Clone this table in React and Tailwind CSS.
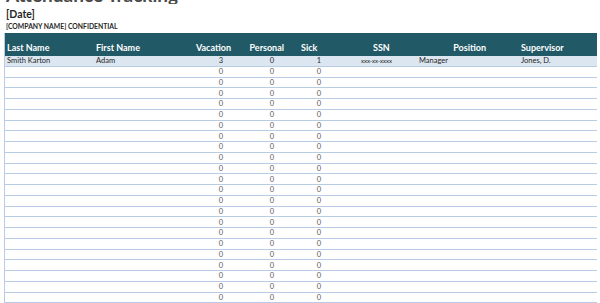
const cols = [
  { key: "last", label: "Last Name", w: "w-[88px]", head: "text-left pl-[2px]", cell: "text-left pl-[2px]" },
  { key: "first", label: "First Name", w: "w-[90px]", head: "text-left pl-[3px]", cell: "text-left pl-[3px]" },
  { key: "vac", label: "Vacation", w: "w-[53px]", head: "text-right pr-[5px]", cell: "text-right pr-[13px]" },
  { key: "per", label: "Personal", w: "w-[52px]", head: "text-right pr-[4px]", cell: "text-right pr-[14px]" },
  { key: "sick", label: "Sick", w: "w-[39px]", head: "text-left pl-[13px]", cell: "text-right pr-[6px]" },
  { key: "ssn", label: "SSN", w: "w-[89px]", head: "text-left pl-[46px]", cell: "text-left pl-[34px]" },
  { key: "pos", label: "Position", w: "w-[77px]", head: "text-right pr-[7px]", cell: "text-left pl-[3px]" },
  { key: "sup", label: "Supervisor", w: "w-[105px]", head: "text-left pl-[28px]", cell: "text-left pl-[28px]" },
];

const rows = [
  { last: "Smith Karton", first: "Adam", vac: 3, per: 0, sick: 1, ssn: "xxx-xx-xxxx", pos: "Manager", sup: "Jones, D." },
  ...Array.from({ length: 22 }, () => ({ vac: 0, per: 0, sick: 0 })),
];

export default function App() {
  return (
    <div
      className="w-[600px] h-[303px] overflow-hidden bg-white text-[#404040]"
      style={{ fontFamily: "Lato, 'Open Sans', sans-serif" }}
    >
      <div className="pl-[6px]">
        {/* title is cut by the top edge */}
        <div className="flex h-[4px] items-end overflow-hidden">
          <h1 className="shrink-0 text-[19px] leading-[19px] font-bold text-[#4a4a4a]">Attendance Tracking</h1>
        </div>
        <p className="mt-[4px] h-[12px] text-[10.5px] leading-[12px] font-bold text-[#262626]">[Date]</p>
        <p className="mt-[2px] h-[9px] text-[6.8px] leading-[9px] font-bold text-[#262626]">
          [COMPANY NAME] CONFIDENTIAL
        </p>
      </div>

      <div className="ml-[4px] mt-[2px] w-[593px] border-l border-[#b8cce4]">
        <div className="flex h-[23px] items-end bg-[#215967] pb-[3px] text-[9px] leading-[11px] font-bold text-white">
          {cols.map((c) => (
            <div key={c.key} className={`${c.w} shrink-0 ${c.head}`}>
              {c.label}
            </div>
          ))}
        </div>
        {rows.map((r, i) => (
          <div
            key={i}
            className={`flex h-[10.75px] items-center border-b border-[#b8cce4] text-[7.5px] leading-[9px] ${
              i === 0 ? "bg-[#dce6f1] text-[#262626]" : "bg-white text-[#595959]"
            }`}
          >
            {cols.map((c) => (
              <div
                key={c.key}
                className={`${c.w} shrink-0 ${c.cell} ${c.key === "ssn" ? "text-[6px]" : ""}`}
              >
                {r[c.key] ?? ""}
              </div>
            ))}
          </div>
        ))}
      </div>
    </div>
  );
}
